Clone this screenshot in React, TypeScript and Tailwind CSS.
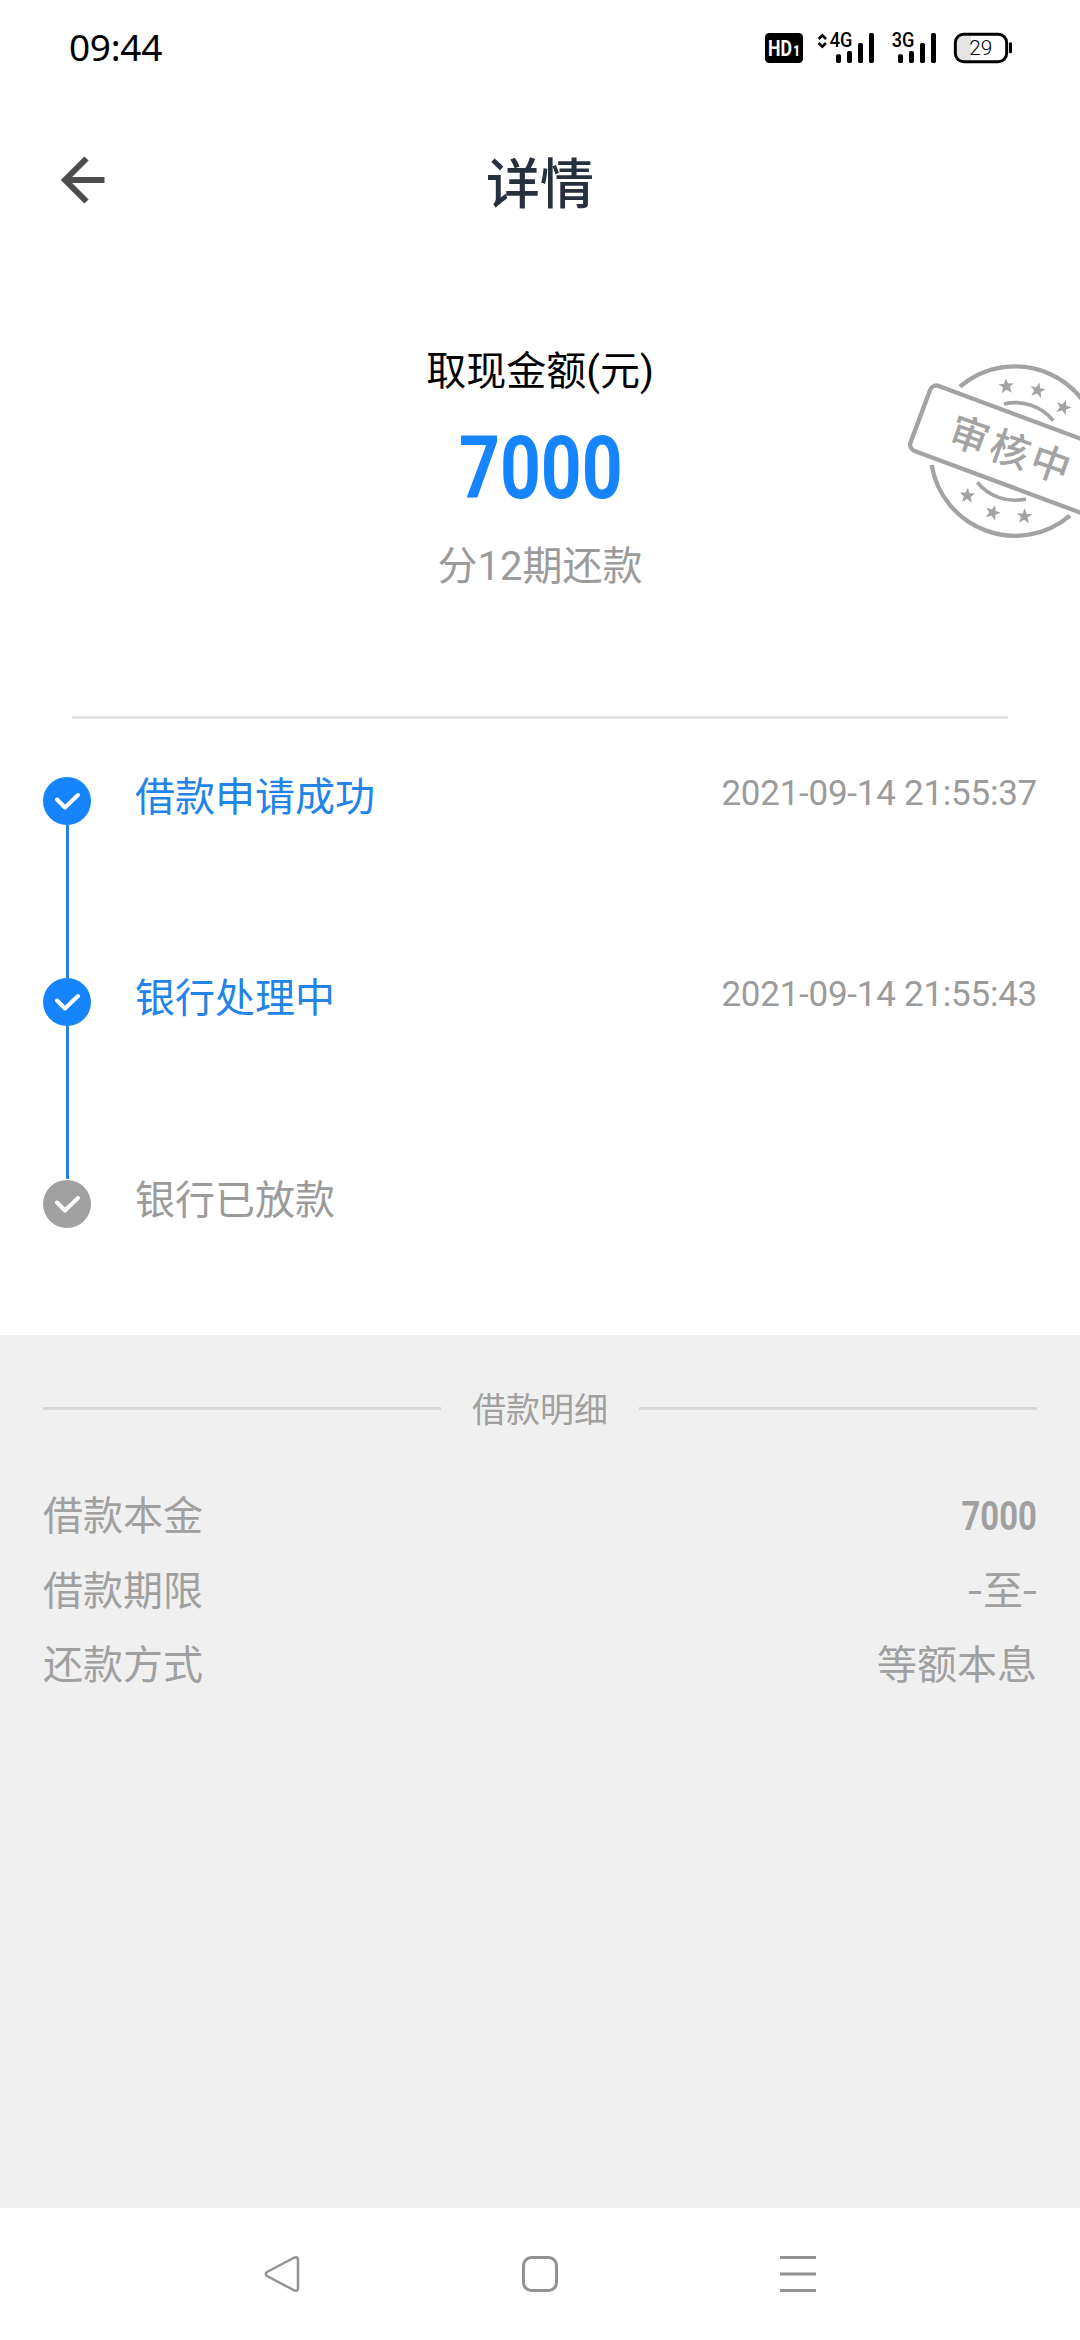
import type { ReactNode } from "react";

const star = "M0-24 6-8 23-8 10 3 15 20 0 10-15 20-10 3-23-8-6-8Z";

function HdBadge() {
  return (
    <svg className="h-[30px] w-[38px]" viewBox="0 0 114 90">
      <rect width="114" height="90" rx="13" fill="#000" />
      <text x="9" y="68" textLength="72" lengthAdjust="spacingAndGlyphs" fontFamily="Roboto" fontWeight="700" fontSize="64" fill="#fff">HD</text>
      <text x="85" y="68" textLength="20" lengthAdjust="spacingAndGlyphs" fontFamily="Roboto" fontWeight="900" fontSize="42" fill="#fff">1</text>
    </svg>
  );
}

function Bars({ x }: { x: number }) {
  return (
    <g>
      <rect x={x} y="64" width="15" height="26" rx="5" />
      <rect x={x + 33} y="54" width="15" height="36" rx="5" />
      <rect x={x + 66} y="30" width="15" height="60" rx="5" />
      <rect x={x + 99} y="0" width="15" height="90" rx="5" />
    </g>
  );
}

function Signal4G() {
  return (
    <svg className="ml-[14px] h-[30px] w-[58px] overflow-visible" viewBox="228 0 174 90">
      <path d="M233 18 244 7 255 18M233 30 244 41 255 30" fill="none" stroke="#000" strokeWidth="8" />
      <text x="266" y="43" textLength="68" lengthAdjust="spacingAndGlyphs" fontFamily="Roboto" fontWeight="500" fontSize="59">4G</text>
      <Bars x={285} />
    </svg>
  );
}

function Signal3G() {
  return (
    <svg className="ml-[17px] h-[30px] w-[45px] overflow-visible" viewBox="453 0 135 90">
      <text x="452" y="43" textLength="68" lengthAdjust="spacingAndGlyphs" fontFamily="Roboto" fontWeight="500" fontSize="59">3G</text>
      <Bars x={471} />
    </svg>
  );
}

function Battery() {
  return (
    <svg className="ml-[17px] h-[30px] w-[59px] overflow-visible" viewBox="639 0 177 90">
      <path d="M690 8H665Q643 8 643 30V60Q643 82 665 82H690Z" fill="#e4e4e4" />
      <rect x="643" y="4" width="154" height="82" rx="25" fill="none" stroke="#000" strokeWidth="9" />
      <rect x="804" y="28" width="9" height="33" rx="4" />
      <text x="685" y="66" textLength="69" lengthAdjust="spacingAndGlyphs" fontFamily="Roboto" fontWeight="300" fontSize="63">29</text>
    </svg>
  );
}

function Stamp() {
  return (
    <svg className="absolute right-0 top-[350px] h-[200px] w-[190px]" viewBox="0 0 570 600" fill="none" stroke="#a3a3a3" strokeWidth="13">
      <path d="M210 110A254 254 0 0 1 629 304" />
      <path d="M125 345A254 254 0 0 0 540 497" />
      <path d="M342 162A146 146 0 0 1 490 212" strokeWidth="11" />
      <path d="M262 397A146 146 0 0 0 408 447" strokeWidth="11" />
      <g transform="translate(375 304) rotate(20.4)">
        <rect x="-303" y="-104" width="606" height="208" rx="20" />
      </g>
      <g transform="translate(362 297) rotate(19.5)" fontFamily="Noto Sans CJK SC, sans-serif" fontWeight="500" fontSize="118" fill="#a3a3a3" stroke="none">
        <text x="-189" y="45" letterSpacing="11">审核中</text>
      </g>
      <g fill="#a3a3a3" stroke="none">
        <path transform="translate(349 109) rotate(-4)" d={star} />
        <path transform="translate(443 121) rotate(12)" d={star} />
        <path transform="translate(520 172) rotate(20)" d={star} />
        <path transform="translate(232 437) rotate(4)" d={star} />
        <path transform="translate(308 488) rotate(20)" d={star} />
        <path transform="translate(403 499) rotate(4)" d={star} />
      </g>
    </svg>
  );
}

function Step({ title, time, done, last }: { title: string; time?: string; done?: boolean; last?: boolean }) {
  return (
    <li className={last ? "flex pt-px" : "flex h-[201px]"}>
      <div className="flex w-12 flex-col items-center">
        <svg className="h-12 w-12 shrink-0" viewBox="0 0 48 48">
          <circle cx="24" cy="24" r="24" fill={done ? "#1684fc" : "#a0a0a0"} />
          <path d="M14 22.500 22 30.500 35 18" fill="none" stroke="#fff" strokeWidth="4" strokeLinecap="round" strokeLinejoin="round" />
        </svg>
        {!last && <div className="w-[3px] grow bg-[#2484e0]" />}
      </div>
      <div className={done ? "ml-[44px] h-10 text-[40px] leading-[42px] text-[#2283e8]" : "ml-[44px] h-10 text-[40px] leading-[42px] text-[#9b9b9b]"}>{title}</div>
      {time && <div className="ml-auto h-10 text-[35px] leading-[33px] tracking-[-0.25px] text-[#9b9b9b]">{time}</div>}
    </li>
  );
}

function Row({ label, children }: { label: string; children: ReactNode }) {
  return (
    <div className="flex h-[74.5px] items-center justify-between text-[40px] leading-none">
      <span>{label}</span>
      <span>{children}</span>
    </div>
  );
}

export default function App() {
  return (
    <div className="relative flex h-[2340px] w-[1080px] flex-col overflow-hidden bg-white font-['Roboto','Noto_Sans_CJK_SC',sans-serif]">
      <div className="flex h-24 items-center pl-[69px] pr-[67px]">
        <span className="mb-[3px] font-['Noto_Sans'] text-[37px] leading-none tracking-[-0.3px] text-black">09:44</span>
        <div className="ml-auto flex items-center">
          <HdBadge />
          <Signal4G />
          <Signal3G />
          <Battery />
        </div>
      </div>

      <header className="flex h-[168px] items-start justify-between px-[60px]">
        <svg className="mt-[60px] h-12 w-12" viewBox="0 0 48 48" fill="none" stroke="#4d4d4d" strokeWidth="6">
          <path d="M26.500 2.500 5 24 26.500 45.500M5 24H44.500" />
        </svg>
        <h1 className="mt-[63px] text-[54px] font-medium leading-[54px] text-[#27303f]">详情</h1>
        <div className="w-12" />
      </header>

      <section className="mx-[72px] flex h-[455px] flex-col items-center border-b-[3px] border-[#e0e2e4] pt-[88px]">
        <div className="text-[40px] leading-10 text-black">取现金额(元)</div>
        <div className="ml-[2px] mt-[31px] scale-x-[0.82] text-[87px] font-bold leading-[90px] text-[#1684fc]">7000</div>
        <div className="mt-[34px] text-[40px] leading-10 text-[#9b9b9b]">分12期还款</div>
      </section>
      <Stamp />

      <ol className="h-[616px] px-[43px] pt-[58px]">
        <Step title="借款申请成功" time="2021-09-14 21:55:37" done />
        <Step title="银行处理中" time="2021-09-14 21:55:43" done />
        <Step title="银行已放款" last />
      </ol>

      <section className="grow bg-[#f0f0f0] px-[43px] pt-[55px] text-[#a0a0a0]">
        <div className="mb-[54px] flex h-9 items-center gap-[31px]">
          <div className="h-[3px] grow bg-[#d8d8d8]" />
          <h2 className="pt-[3px] text-[34px] leading-9">借款明细</h2>
          <div className="h-[3px] grow bg-[#d8d8d8]" />
        </div>
        <Row label="借款本金">
          <span className="inline-block origin-right scale-x-[0.82] font-bold">7000</span>
        </Row>
        <Row label="借款期限">
          <span className="flex items-center">
            <span className="inline-block w-[15px] origin-left scale-x-125 font-['Roboto']">-</span>
            <span>至</span>
            <span className="inline-block w-[14px] origin-left scale-x-125 font-['Roboto']">-</span>
          </span>
        </Row>
        <Row label="还款方式">等额本息</Row>
      </section>

      <nav className="flex h-[132px] items-center justify-between px-[264px]">
        <svg className="h-9 w-9" viewBox="0 0 36 36" fill="none" stroke="#929292" strokeWidth="2.500">
          <path d="M29.500 2 3 16Q.5 18 3 20L29.500 34Q34 36 34 32V4Q34 0 29.500 2Z" strokeLinejoin="round" />
        </svg>
        <svg className="h-9 w-9" viewBox="0 0 36 36" fill="none" stroke="#929292" strokeWidth="3">
          <rect x="1.500" y="1.500" width="33" height="33" rx="8" />
        </svg>
        <svg className="h-9 w-9" viewBox="0 0 36 36" fill="none" stroke="#929292" strokeWidth="3">
          <path d="M0 1.500H36M0 18H36M0 34.500H36" />
        </svg>
      </nav>
    </div>
  );
}
